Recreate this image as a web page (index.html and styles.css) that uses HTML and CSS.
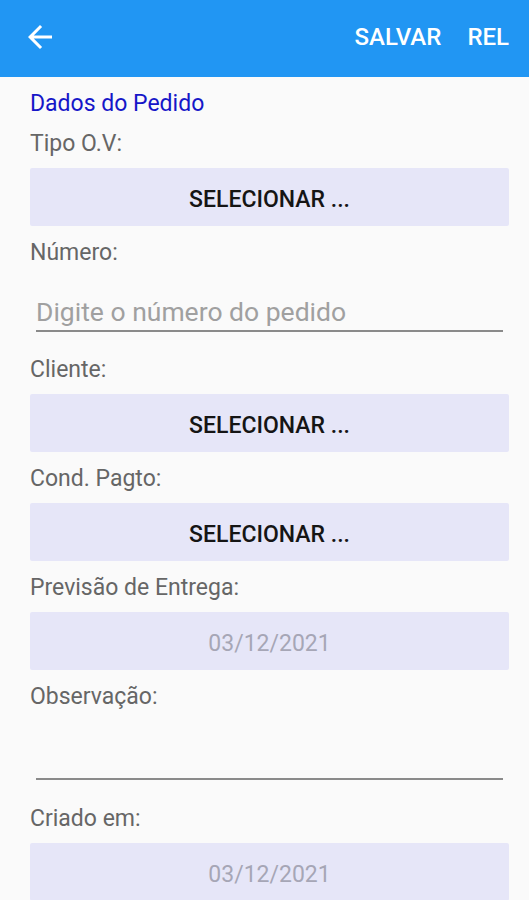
FILE: index.html
```html
<!DOCTYPE html>
<html lang="pt-BR">
<head>
  <meta charset="UTF-8">
  <meta name="viewport" content="width=device-width, initial-scale=1">
  <title>Pedido</title>
  <link rel="stylesheet" href="styles.css">
</head>
<body>
  <header class="topbar">
    <button class="back" aria-label="Voltar">
      <svg viewBox="0 0 24 24" width="36" height="36"><path fill="#fff" d="M20 11H7.83l5.59-5.59L12 4l-8 8 8 8 1.41-1.41L7.83 13H20v-2z"/></svg>
    </button>
    <div class="actions">
      <button class="action">SALVAR</button>
      <button class="action">REL</button>
    </div>
  </header>

  <main class="form">
    <p class="label title">Dados do Pedido</p>

    <p class="label">Tipo O.V:</p>
    <button class="select">SELECIONAR ...</button>

    <p class="label">Número:</p>
    <div class="field">
      <input type="text" placeholder="Digite o número do pedido">
    </div>

    <p class="label">Cliente:</p>
    <button class="select">SELECIONAR ...</button>

    <p class="label">Cond. Pagto:</p>
    <button class="select">SELECIONAR ...</button>

    <p class="label">Previsão de Entrega:</p>
    <div class="date">03/12/2021</div>

    <p class="label">Observação:</p>
    <div class="field">
      <textarea class="obs"></textarea>
    </div>

    <p class="label">Criado em:</p>
    <div class="date">03/12/2021</div>
  </main>
</body>
</html>
```

FILE: styles.css
```css
body {
  margin: 0;
  background: #fafafa;
  font-family: Roboto, "Liberation Sans", sans-serif;
  overflow: hidden;
}
.topbar {
  height: 77px;
  background: #2196f3;
  display: flex;
  align-items: center;
  justify-content: space-between;
  padding: 0 20px 0 22px;
  box-sizing: border-box;
}
.back {
  background: none; border: none; padding: 0; margin: 0;
  width: 36px; height: 36px; display: flex;
  margin-top: -4px;
}
.actions { display: flex; gap: 26px; margin-top: -4px; }
.action {
  background: none; border: none; padding: 0; color: #fff;
  font-family: Roboto, sans-serif; font-size: 24px; font-weight: 500;
}
.form { padding: 0 20px 0 30px; }
.label {
  margin: 13px 0 11px;
  font-size: 23px;
  line-height: 27px;
  color: #666;
}
.title { color: #1616c8; }
.select, .date {
  display: flex;
  align-items: center;
  justify-content: center;
  width: 100%;
  height: 58px;
  padding: 4px 0 0;
  box-sizing: border-box;
  background: #e6e6f8;
  border: none;
  border-radius: 2px;
  font-family: Roboto, sans-serif;
  font-size: 23px;
}
.select { color: #151515; font-weight: 500; }
.date { color: #a6a6b6; }
.field { padding: 0 6px 11px; }
.field input, .field textarea {
  display: block;
  width: 100%;
  box-sizing: content-box;
  margin: 0;
  padding: 16px 0 0;
  height: 37px;
  border: none;
  border-bottom: 2px solid #8a8a8a;
  background: transparent;
  font-family: Roboto, sans-serif;
  font-size: 26.5px;
  line-height: 31px;
  color: #333;
  outline: none;
}
.field input::placeholder { color: #a0a0a0; }
.field textarea.obs { height: 39px; padding: 18px 0 0; resize: none; }
.field:has(textarea) { padding-bottom: 12px; }
```
